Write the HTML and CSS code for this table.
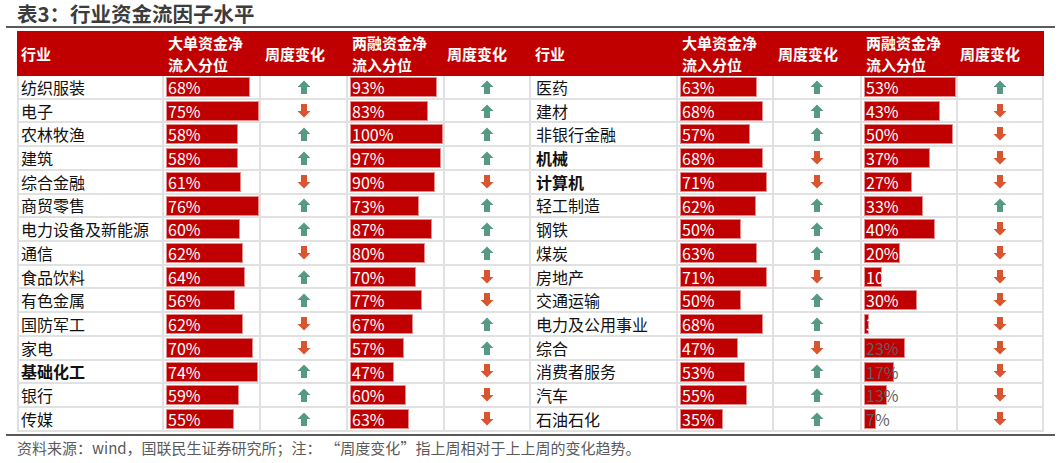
FILE: index.html
```html
<!DOCTYPE html>
<html lang="zh-CN">
<head>
<meta charset="utf-8">
<title>表3：行业资金流因子水平</title>
<link rel="stylesheet" href="styles.css">
</head>
<body>
<div class="title">表3：行业资金流因子水平</div>
<div class="grid">
  <div class="h">行业</div>
  <div class="h"><span>大单资金净</span><span>流入分位</span></div>
  <div class="h">周度变化</div>
  <div class="h"><span>两融资金净</span><span>流入分位</span></div>
  <div class="h h2">周度变化</div>
  <div class="h">行业</div>
  <div class="h"><span>大单资金净</span><span>流入分位</span></div>
  <div class="h">周度变化</div>
  <div class="h"><span>两融资金净</span><span>流入分位</span></div>
  <div class="h h2">周度变化</div>

  <!-- row 1 -->
  <div class="c n">纺织服装</div><div class="c b"><div class="bar" style="width:84.1px">68%</div></div><div class="c a"><svg class="up"><use href="#up"/></svg></div><div class="c b"><div class="bar" style="width:87.4px">93%</div></div><div class="c a"><svg class="up"><use href="#up"/></svg></div>
  <div class="c n">医药</div><div class="c b"><div class="bar" style="width:77.2px">63%</div></div><div class="c a"><svg class="up"><use href="#up"/></svg></div><div class="c b"><div class="bar" style="width:94px">53%</div></div><div class="c a"><svg class="up"><use href="#up"/></svg></div>
  <!-- row 2 -->
  <div class="c n">电子</div><div class="c b"><div class="bar" style="width:92.8px">75%</div></div><div class="c a"><svg class="dn"><use href="#dn"/></svg></div><div class="c b"><div class="bar" style="width:78px">83%</div></div><div class="c a"><svg class="up"><use href="#up"/></svg></div>
  <div class="c n">建材</div><div class="c b"><div class="bar" style="width:83.3px">68%</div></div><div class="c a"><svg class="up"><use href="#up"/></svg></div><div class="c b"><div class="bar" style="width:76.3px">43%</div></div><div class="c a"><svg class="dn"><use href="#dn"/></svg></div>
  <!-- row 3 -->
  <div class="c n">农林牧渔</div><div class="c b"><div class="bar" style="width:71.7px">58%</div></div><div class="c a"><svg class="up"><use href="#up"/></svg></div><div class="c b"><div class="bar" style="width:94px">100%</div></div><div class="c a"><svg class="up"><use href="#up"/></svg></div>
  <div class="c n">非银行金融</div><div class="c b"><div class="bar" style="width:69.8px">57%</div></div><div class="c a"><svg class="up"><use href="#up"/></svg></div><div class="c b"><div class="bar" style="width:88.7px">50%</div></div><div class="c a"><svg class="dn"><use href="#dn"/></svg></div>
  <!-- row 4 -->
  <div class="c n">建筑</div><div class="c b"><div class="bar" style="width:71.7px">58%</div></div><div class="c a"><svg class="up"><use href="#up"/></svg></div><div class="c b"><div class="bar" style="width:91.2px">97%</div></div><div class="c a"><svg class="up"><use href="#up"/></svg></div>
  <div class="c n bold">机械</div><div class="c b"><div class="bar" style="width:83.3px">68%</div></div><div class="c a"><svg class="dn"><use href="#dn"/></svg></div><div class="c b"><div class="bar" style="width:65.6px">37%</div></div><div class="c a"><svg class="dn"><use href="#dn"/></svg></div>
  <!-- row 5 -->
  <div class="c n">综合金融</div><div class="c b"><div class="bar" style="width:75.4px">61%</div></div><div class="c a"><svg class="dn"><use href="#dn"/></svg></div><div class="c b"><div class="bar" style="width:84.6px">90%</div></div><div class="c a"><svg class="dn"><use href="#dn"/></svg></div>
  <div class="c n bold">计算机</div><div class="c b"><div class="bar" style="width:87px">71%</div></div><div class="c a"><svg class="dn"><use href="#dn"/></svg></div><div class="c b"><div class="bar" style="width:47.9px">27%</div></div><div class="c a"><svg class="dn"><use href="#dn"/></svg></div>
  <!-- row 6 -->
  <div class="c n">商贸零售</div><div class="c b"><div class="bar" style="width:94px">76%</div></div><div class="c a"><svg class="up"><use href="#up"/></svg></div><div class="c b"><div class="bar" style="width:68.6px">73%</div></div><div class="c a"><svg class="up"><use href="#up"/></svg></div>
  <div class="c n">轻工制造</div><div class="c b"><div class="bar" style="width:76px">62%</div></div><div class="c a"><svg class="up"><use href="#up"/></svg></div><div class="c b"><div class="bar" style="width:58.5px">33%</div></div><div class="c a"><svg class="up"><use href="#up"/></svg></div>
  <!-- row 7 -->
  <div class="c n">电力设备及新能源</div><div class="c b"><div class="bar" style="width:74.2px">60%</div></div><div class="c a"><svg class="up"><use href="#up"/></svg></div><div class="c b"><div class="bar" style="width:81.8px">87%</div></div><div class="c a"><svg class="up"><use href="#up"/></svg></div>
  <div class="c n">钢铁</div><div class="c b"><div class="bar" style="width:61.3px">50%</div></div><div class="c a"><svg class="up"><use href="#up"/></svg></div><div class="c b"><div class="bar" style="width:70.9px">40%</div></div><div class="c a"><svg class="dn"><use href="#dn"/></svg></div>
  <!-- row 8 -->
  <div class="c n">通信</div><div class="c b"><div class="bar" style="width:76.7px">62%</div></div><div class="c a"><svg class="dn"><use href="#dn"/></svg></div><div class="c b"><div class="bar" style="width:75.2px">80%</div></div><div class="c a"><svg class="up"><use href="#up"/></svg></div>
  <div class="c n">煤炭</div><div class="c b"><div class="bar" style="width:77.2px">63%</div></div><div class="c a"><svg class="up"><use href="#up"/></svg></div><div class="c b"><div class="bar" style="width:35.5px">20%</div></div><div class="c a"><svg class="dn"><use href="#dn"/></svg></div>
  <!-- row 9 -->
  <div class="c n">食品饮料</div><div class="c b"><div class="bar" style="width:79.2px">64%</div></div><div class="c a"><svg class="up"><use href="#up"/></svg></div><div class="c b"><div class="bar" style="width:65.8px">70%</div></div><div class="c a"><svg class="dn"><use href="#dn"/></svg></div>
  <div class="c n">房地产</div><div class="c b"><div class="bar" style="width:87px">71%</div></div><div class="c a"><svg class="dn"><use href="#dn"/></svg></div><div class="c b"><div class="bar" style="width:17.7px">10%</div></div><div class="c a"><svg class="dn"><use href="#dn"/></svg></div>
  <!-- row 10 -->
  <div class="c n">有色金属</div><div class="c b"><div class="bar" style="width:69.3px">56%</div></div><div class="c a"><svg class="up"><use href="#up"/></svg></div><div class="c b"><div class="bar" style="width:72.4px">77%</div></div><div class="c a"><svg class="dn"><use href="#dn"/></svg></div>
  <div class="c n">交通运输</div><div class="c b"><div class="bar" style="width:61.3px">50%</div></div><div class="c a"><svg class="up"><use href="#up"/></svg></div><div class="c b"><div class="bar" style="width:53.2px">30%</div></div><div class="c a"><svg class="dn"><use href="#dn"/></svg></div>
  <!-- row 11 -->
  <div class="c n">国防军工</div><div class="c b"><div class="bar" style="width:76.7px">62%</div></div><div class="c a"><svg class="dn"><use href="#dn"/></svg></div><div class="c b"><div class="bar" style="width:63px">67%</div></div><div class="c a"><svg class="up"><use href="#up"/></svg></div>
  <div class="c n">电力及公用事业</div><div class="c b"><div class="bar" style="width:83.3px">68%</div></div><div class="c a"><svg class="up"><use href="#up"/></svg></div><div class="c b"><div class="bar" style="width:5.3px">3%</div></div><div class="c a"><svg class="dn"><use href="#dn"/></svg></div>
  <!-- row 12 -->
  <div class="c n">家电</div><div class="c b"><div class="bar" style="width:86.6px">70%</div></div><div class="c a"><svg class="dn"><use href="#dn"/></svg></div><div class="c b"><div class="bar" style="width:53.6px">57%</div></div><div class="c a"><svg class="up"><use href="#up"/></svg></div>
  <div class="c n">综合</div><div class="c b"><div class="bar" style="width:57.6px">47%</div></div><div class="c a"><svg class="dn"><use href="#dn"/></svg></div><div class="c b"><div class="bar grey" style="width:40.8px">23%</div></div><div class="c a"><svg class="dn"><use href="#dn"/></svg></div>
  <!-- row 13 -->
  <div class="c n bold">基础化工</div><div class="c b"><div class="bar" style="width:91.5px">74%</div></div><div class="c a"><svg class="up"><use href="#up"/></svg></div><div class="c b"><div class="bar" style="width:44.2px">47%</div></div><div class="c a"><svg class="dn"><use href="#dn"/></svg></div>
  <div class="c n">消费者服务</div><div class="c b"><div class="bar" style="width:64.9px">53%</div></div><div class="c a"><svg class="up"><use href="#up"/></svg></div><div class="c b"><div class="bar grey" style="width:30.2px">17%</div></div><div class="c a"><svg class="dn"><use href="#dn"/></svg></div>
  <!-- row 14 -->
  <div class="c n">银行</div><div class="c b"><div class="bar" style="width:73px">59%</div></div><div class="c a"><svg class="up"><use href="#up"/></svg></div><div class="c b"><div class="bar" style="width:56.4px">60%</div></div><div class="c a"><svg class="dn"><use href="#dn"/></svg></div>
  <div class="c n">汽车</div><div class="c b"><div class="bar" style="width:67.4px">55%</div></div><div class="c a"><svg class="up"><use href="#up"/></svg></div><div class="c b"><div class="bar grey" style="width:23.1px">13%</div></div><div class="c a"><svg class="dn"><use href="#dn"/></svg></div>
  <!-- row 15 -->
  <div class="c n">传媒</div><div class="c b"><div class="bar" style="width:68px">55%</div></div><div class="c a"><svg class="up"><use href="#up"/></svg></div><div class="c b"><div class="bar" style="width:59.2px">63%</div></div><div class="c a"><svg class="dn"><use href="#dn"/></svg></div>
  <div class="c n">石油石化</div><div class="c b"><div class="bar" style="width:42.9px">35%</div></div><div class="c a"><svg class="up"><use href="#up"/></svg></div><div class="c b"><div class="bar grey" style="width:12.4px">7%</div></div><div class="c a"><svg class="dn"><use href="#dn"/></svg></div>
</div>
<div class="foot">资料来源：wind，国联民生证券研究所；注：<span class="ql">“</span>周度变化<span class="qr">”</span>指上周相对于上上周的变化趋势。</div>

<svg class="defs" width="0" height="0">
  <symbol id="up" viewBox="0 0 14 14"><polygon points="7,0.5 13.5,7 10,7 10,14 4,14 4,7 0.5,7"/></symbol>
  <symbol id="dn" viewBox="0 0 14 14"><polygon points="7,13.5 13.5,7 10,7 10,0 4,0 4,7 0.5,7"/></symbol>
</svg>
</body>
</html>
```

FILE: styles.css
```css
html, body {
  margin: 0;
  padding: 0;
  background: #fff;
}
body {
  font-family: "Noto Sans CJK SC", "Noto Sans", sans-serif;
  color: #111;
  width: 1060px;
}
.title {
  margin: 0 5px 0 6px;
  padding: 0 0 0 11px;
  height: 26px;
  line-height: 27px;
  font-size: 20.5px;
  font-weight: 700;
  color: #3c3c3c;
  border-bottom: 2px solid #5a5a5a;
}
.grid {
  margin: 3px 0 0 17px;
  width: 1027px;
  display: grid;
  grid-template-columns: 147px 97px 87px 97px 86px 147px 96px 88px 96px 86px;
  grid-template-rows: 45px repeat(15, 23.73px);
}
.h {
  background: #c00000;
  color: #fff;
  font-weight: 700;
  font-size: 15px;
  line-height: 22px;
  padding-left: 4px;
  display: flex;
  flex-direction: column;
  justify-content: center;
}
.h2 { padding-left: 2px; }
.c {
  box-sizing: border-box;
  border-right: 2px solid #e1e1e1;
  border-bottom: 2px solid #e1e1e1;
  display: flex;
  align-items: center;
  min-width: 0;
}
.n {
  border-left: 2px solid #e1e1e1;
  padding-left: 2px;
  font-size: 16px;
  white-space: nowrap;
  color: #111;
}
.c.n:nth-child(10n+6) { border-left: none; padding-left: 5px; }
.bold { font-weight: 700; }
.b {
  padding: 0 0 0 2px;
  align-items: flex-start;
  padding-top: 1px;
}
.bar {
  box-sizing: border-box;
  height: 20px;
  background: #c00000;
  border: 1px solid #e38c8c;
  color: #fff;
  font-size: 16px;
  line-height: 18px;
  padding-left: 1px;
  white-space: nowrap;
  overflow: visible;
}
.bar.grey { color: #5f5f5f; }
.a { justify-content: center; }
.a svg { width: 14px; height: 14px; }
.up { fill: #569a84; }
.dn { fill: #d9552f; }
.defs { position: absolute; }
.foot {
  margin: 2px 5px 0 6px;
  padding: 2px 0 0 11px;
  border-top: 2px solid #5a5a5a;
  font-size: 15px;
  line-height: 20px;
  color: #5a5a5a;
  white-space: nowrap;
}
.ql, .qr {
  display: inline-block;
  width: 1em;
}
.ql { text-align: right; margin-left: 0.25em; }
.qr { text-align: left; }
```
